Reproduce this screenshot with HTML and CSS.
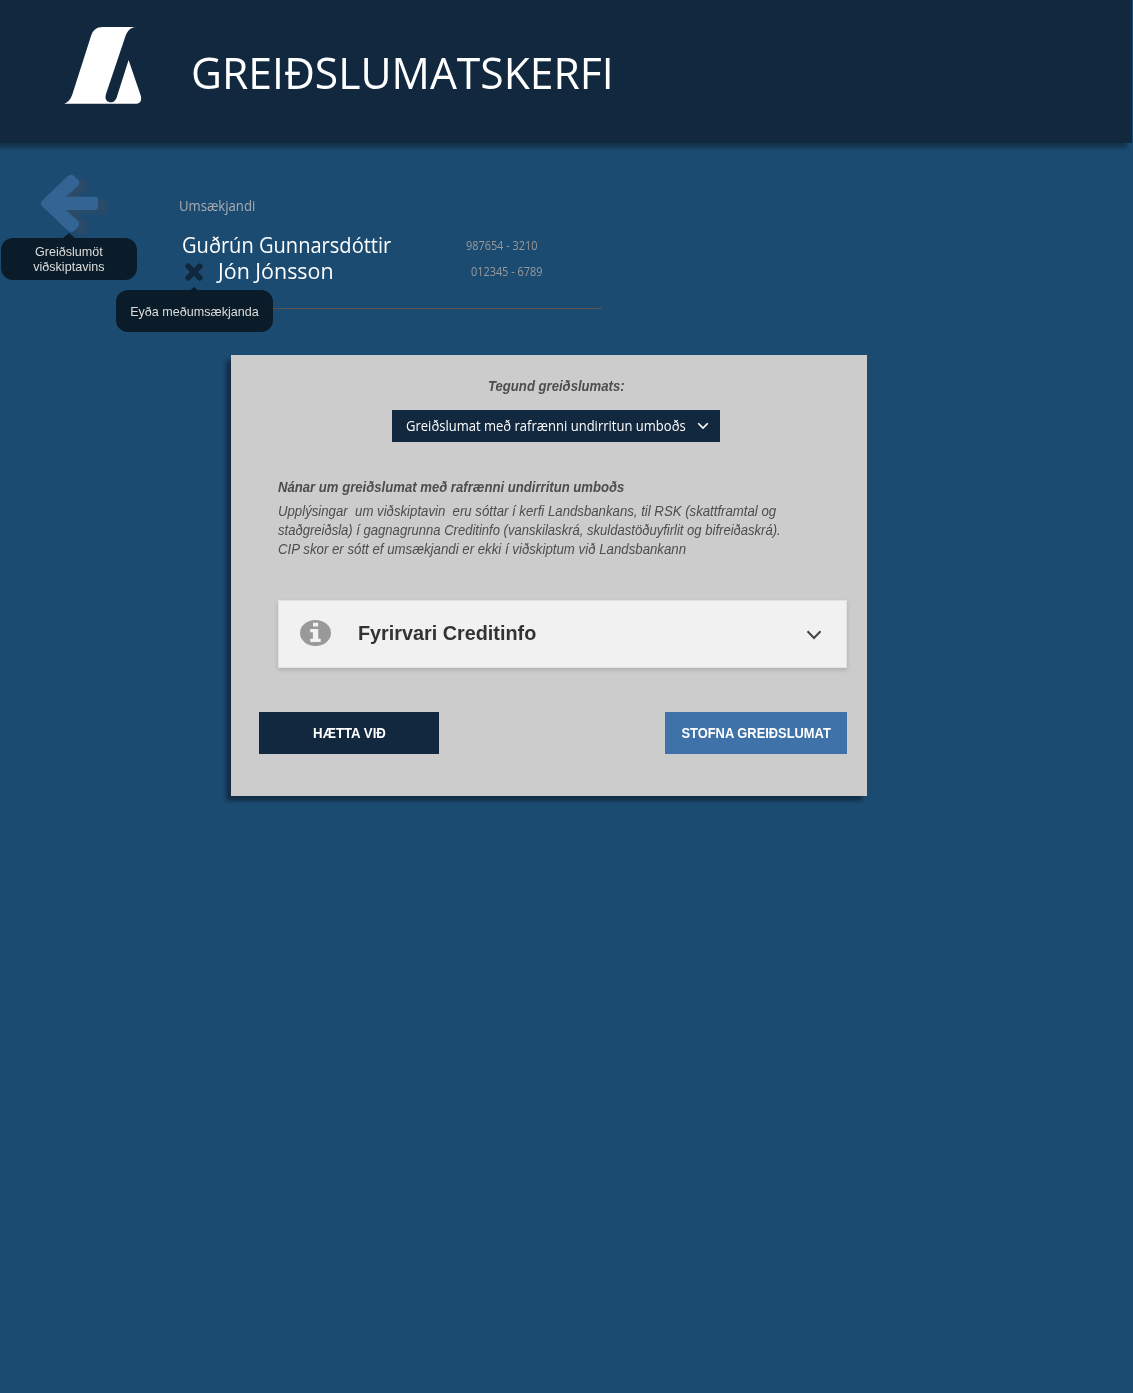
FILE: index.html
```html
<!DOCTYPE html>
<html lang="is">
<head>
<meta charset="utf-8">
<title>Greiðslumatskerfi</title>
<link rel="stylesheet" href="styles.css">
</head>
<body>
<header class="header">
  <svg class="logo" viewBox="64 27 78 77" width="78" height="77" aria-hidden="true">
    <path fill="#fff" d="M103 27H135.500C130.500 27.500 127 31 125 37.500L106 94C104.500 99 106.500 102.300 110.700 102.300C114 102.300 116 100 117 96.500L128.600 60L140.700 95.500C142.200 100.500 140 103.800 135.500 103.800H64.300C68.500 102 70.800 99 72.300 94.500L91 36C93 30 96.500 27 103 27Z"/>
  </svg>
  <h1 class="title">GREIÐSLUMATSKERFI</h1>
</header>
<main class="page">
  <section class="top">
    <div class="back">
      <svg class="arrow" viewBox="0 0 70 62" width="70" height="62" aria-hidden="true">
        <path fill="#346493" d="M2.200 26.500L27.500 2.200Q31 -.8 34.500 2.200L37.700 5.400Q41 8.800 37.700 12.200L25.800 22.700H54.500Q58 22.700 58 26V33Q58 36 54.500 36H25.800L37.700 46.500Q41 49.800 37.700 53.200L34.500 56.400Q31 59.500 27.500 56.400L2.200 32.300Q-.6 29.400 2.200 26.500Z"/>
      </svg>
      <div class="tip tip-back"><span class="tip-text">Greiðslumöt<br>viðskiptavins</span></div>
    </div>
    <div class="applicants">
      <div class="label">Umsækjandi</div>
      <div class="person"><span class="name">Guðrún Gunnarsdóttir</span><span class="kt">987654 - 3210</span></div>
      <div class="person second">
        <span class="remove">
          <svg viewBox="0 0 18 18" width="18" height="18" aria-hidden="true"><path d="M3.200 3.200L14.800 14.800M14.800 3.200L3.200 14.800" stroke="#10273e" stroke-width="5.600" stroke-linecap="round"/></svg>
          <span class="tip tip-remove"><span class="tip-text">Eyða meðumsækjanda</span></span>
        </span>
        <span class="name name2">Jón Jónsson</span><span class="kt kt2">012345 - 6789</span>
      </div>
    </div>
  </section>
  <section class="card">
    <div class="type-label"><span class="fit">Tegund greiðslumats:</span></div>
    <div class="select">
      <span class="select-text"><span>Greiðslumat með rafrænni undirritun umboðs</span></span>
      <svg viewBox="0 0 12 8" width="12" height="8" aria-hidden="true"><path d="M1.200 1.200L6 6L10.800 1.200" fill="none" stroke="#fff" stroke-width="1.600"/></svg>
    </div>
    <div class="info">
      <h2 class="info-title"><span class="fit">Nánar um greiðslumat með rafrænni undirritun umboðs</span></h2>
      <p class="info-text"><span class="line l1">Upplýsingar&nbsp; um viðskiptavin&nbsp; eru sóttar í kerfi Landsbankans, til RSK (skattframtal og</span><span class="line l2">staðgreiðsla) í gagnagrunna Creditinfo (vanskilaskrá, skuldastöðuyfirlit og bifreiðaskrá).</span><span class="line l3">CIP skor er sótt ef umsækjandi er ekki í viðskiptum við Landsbankann</span></p>
    </div>
    <div class="accordion">
      <svg viewBox="0 0 31 26" width="31" height="26" aria-hidden="true"><ellipse cx="15.500" cy="13" rx="15.500" ry="13" fill="#999"/><path fill="#f2f2f2" d="M13 2.800h5.200v3.700H13zM10.200 9h8v9.700h2.500v3.300H10.200v-3.300h2.700v-6.400h-2.700z"/></svg>
      <span class="acc-title">Fyrirvari Creditinfo</span>
      <svg class="chev" viewBox="0 0 16 10" width="16" height="10" aria-hidden="true"><path d="M1.500 1.200L8 8L14.500 1.200" fill="none" stroke="#444" stroke-width="2"/></svg>
    </div>
    <div class="actions">
      <button class="btn cancel"><span>HÆTTA VIÐ</span></button>
      <button class="btn create"><span>STOFNA GREIÐSLUMAT</span></button>
    </div>
  </section>
</main>
</body>
</html>
```
FILE: styles.css
```css
* { box-sizing: border-box; }
body { margin: 0; min-height: 1393px; background: #1c4b72; font-family: "Liberation Sans", Arial, sans-serif; }
.header { width: 1132px; height: 143px; background: #11283e; box-shadow: -5px 5px 4px rgba(0,0,0,.33); display: flex; align-items: flex-start; padding: 27px 0 0 64px; }
.logo { flex: none; }
.title { margin: 15px 0 0 49px; font: 400 44px/60px "Open Sans", "Noto Sans", sans-serif; color: #fff; white-space: nowrap; transform: scaleX(.969); transform-origin: 0 0; }
.top { display: flex; height: 212px; }
.back { width: 179px; padding: 31px 0 0 40px; position: relative; flex: none; }
.arrow { display: block; filter: drop-shadow(9px 3px 2px rgba(70,75,85,.4)); overflow: visible; }
.applicants { width: 423px; height: 166px; padding-top: 51px; border-bottom: 1px solid #5b5350; white-space: nowrap; font-family: "Open Sans", "Noto Sans", sans-serif; }
.label { font-size: 14px; line-height: 24px; color: #a9adb2; transform: scaleX(.938); transform-origin: 0 0; }
.person { display: flex; align-items: center; height: 26px; padding-left: 3px; margin-top: 14px; }
.second { margin-top: 0; padding-left: 6px; }
.name { width: 284px; padding-bottom: 2px; font-size: 22px; line-height: 24px; color: #fff; transform: scaleX(.912); transform-origin: 0 50%; }
.name2 { width: 253px; transform: scaleX(.974); }
.kt { font-size: 12px; color: #999; transform: scaleX(.907); transform-origin: 0 50%; }
.remove { position: relative; width: 33px; height: 18px; margin-top: 2px; display: block; }
.remove svg { display: block; margin-left: -.5px; }
.tip { position: absolute; z-index: 2; display: flex; align-items: center; justify-content: center; height: 42px; border-radius: 12px; background: rgba(8,22,33,.89); color: #ddd; font: 13px/15px "Liberation Sans", Arial, sans-serif; text-align: center; }
.tip::before { content: ""; position: absolute; top: -5px; left: 62px; border: solid transparent; border-width: 0 6px 5px; border-bottom-color: #0a1b2a; }
.tip-text { transform: scaleX(.967); }
.tip-back { left: 1px; top: 95px; width: 136px; }
.tip-remove { left: -69px; top: 27px; width: 157px; }
.tip-remove::before { top: -3px; left: 72px; }
.card { width: 636px; height: 441px; margin-left: 231px; background: #ccc; box-shadow: -5px 5px 4px rgba(0,0,0,.4); padding: 21px 20px 0 28px; color: #4d4d4d; white-space: nowrap; }
.type-label { font: italic bold 15px/20px "Liberation Sans", Arial, sans-serif; padding-left: 229px; }
.fit { display: inline-block; transform: scaleX(.875); transform-origin: 0 0; }
.select { display: flex; align-items: center; width: 328px; height: 32px; margin: 14px 0 0 133px; padding-left: 14px; background: #11283e; color: #fff; font: 14px/20px "Open Sans", "Noto Sans", sans-serif; }
.select-text { width: 291px; }
.select-text span { display: inline-block; transform: scaleX(.93); transform-origin: 0 0; }
.info { margin: 35px 0 0 19px; }
.info-title { margin: 0; font: italic bold 15px/20px "Liberation Sans", Arial, sans-serif; }
.info-text { margin: 4px 0 0; font: italic 15px/19px "Liberation Sans", Arial, sans-serif; }
.line { display: block; width: max-content; transform-origin: 0 0; }
.l1 { transform: scaleX(.88); }
.l2 { transform: scaleX(.87); }
.l3 { transform: scaleX(.883); }
.accordion { display: flex; align-items: center; height: 68px; margin: 42px 0 0 19px; padding: 0 24px 2px 21px; border: 1px solid #e2e2e2; background: #f1f1f1; box-shadow: 0 2px 4px rgba(0,0,0,.15); }
.acc-title { margin-left: 27px; font: bold 20px/24px "Liberation Sans", Arial, sans-serif; color: #333; transform: scaleX(.99); transform-origin: 0 0; }
.chev { margin: 3px 0 0 auto; }
.actions { display: flex; justify-content: space-between; margin-top: 44px; }
.btn { height: 42px; border: 0; padding: 0; color: #fff; font: bold 14px/20px "Liberation Sans", Arial, sans-serif; }
.btn span { display: inline-block; transform: scaleX(.945); }
.cancel { width: 180px; background: #11283e; }
.create { width: 182px; background: #3f72a8; }
.create span { transform: scaleX(.92); }
```
